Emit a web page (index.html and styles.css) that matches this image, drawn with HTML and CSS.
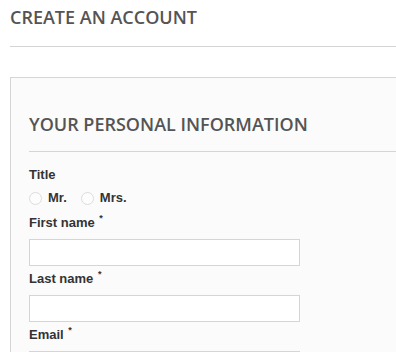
FILE: index.html
```html
<!DOCTYPE html>
<html>
<head>
	<title>Create an account</title>
	<link rel="stylesheet" href="styles.css">
	<meta charset="utf-8">
</head>
<body>
	<div class="page">
		<h1 class="page__heading">Create an account</h1>

		<form class="box">
			<h3 class="box__heading">Your personal information</h3>

			<div class="field">
				<label class="field__label">Title</label>
				<div class="radios">
					<label class="radio"><span class="radio__dot"></span>Mr.</label>
					<label class="radio"><span class="radio__dot"></span>Mrs.</label>
				</div>
			</div>

			<div class="field">
				<label class="field__label">First name <sup>*</sup></label>
				<input class="field__input" type="text">
			</div>

			<div class="field">
				<label class="field__label">Last name <sup>*</sup></label>
				<input class="field__input" type="text">
			</div>

			<div class="field">
				<label class="field__label">Email <sup>*</sup></label>
				<input class="field__input" type="text">
			</div>
		</form>
	</div>
</body>
</html>
```

FILE: styles.css
```css
* {
	box-sizing: border-box;
	margin: 0;
	padding: 0;
}

body {
	background: white;
	overflow: hidden;
	height: 352px;
}

.page {
	width: 560px;
	padding: 5px 0 0 10px;
}

.page__heading {
	font-family: "Open Sans", sans-serif;
	font-weight: 600;
	font-size: 18px;
	line-height: 24px;
	text-transform: uppercase;
	color: #555454;
	padding-bottom: 17px;
	border-bottom: 1px solid #d6d4d4;
	margin-bottom: 30px;
}

.box {
	background: #fbfbfb;
	border: 1px solid #d6d4d4;
	padding: 34px 18px 20px;
}

.box__heading {
	font-family: "Open Sans", sans-serif;
	font-weight: 600;
	font-size: 18px;
	line-height: 24px;
	text-transform: uppercase;
	color: #555454;
	padding-bottom: 15px;
	border-bottom: 1px solid #d6d4d4;
	margin-bottom: 14px;
}

.field {
	margin-bottom: 4px;
}

.field__label {
	display: block;
	font-family: "Liberation Sans", Arial, sans-serif;
	font-weight: bold;
	font-size: 13px;
	line-height: 18px;
	color: #333;
	margin-bottom: 7px;
}

.field__label sup {
	font-size: 9px;
	line-height: 0;
	vertical-align: baseline;
	position: relative;
	top: -6px;
	margin-left: 1px;
}

.field__input {
	display: block;
	width: 271px;
	height: 27px;
	border: 1px solid #d6d4d4;
	background: white;
}

.radios {
	display: flex;
	gap: 14px;
	height: 18px;
	margin-top: -2px;
	margin-bottom: 7px;
}

.radio {
	display: flex;
	align-items: center;
	gap: 6px;
	font-family: "Liberation Sans", Arial, sans-serif;
	font-weight: bold;
	font-size: 13px;
	line-height: 18px;
	color: #333;
}

.radio__dot {
	width: 13px;
	height: 13px;
	border-radius: 50%;
	border: 1px solid #dcdcdc;
	background: #fdfdfd;
	margin-top: 1px;
}
```
